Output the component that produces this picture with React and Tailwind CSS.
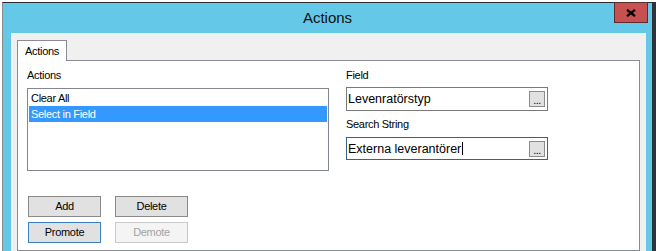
export default function App() {
  const btn =
    "w-[73px] h-[21px] flex items-center justify-center text-[11px] tracking-[-0.3px] border";
  return (
    <div className="w-[656px] h-[251px] bg-white overflow-hidden font-['Liberation_Sans',Arial,sans-serif] text-black">
      <div className="relative ml-[2px] mt-[2px] w-[654px] h-[249px] flex flex-col bg-[#64c9e9] border-t border-l border-r-4 border-t-[#2b2b2b] border-l-[#8a8a8a] border-r-[#2d3338]">
        <div className="h-[30px] flex items-center justify-center text-[15px] text-[#111]">
          Actions
        </div>
        <div className="absolute top-[-1px] right-[4px] w-[34px] h-[21px] bg-[#c75050] border border-[#5e2c2c] flex items-center justify-center">
          <svg width="10" height="8" viewBox="0 0 10 8">
            <path d="M1 0.8 L9 7.2 M9 0.8 L1 7.2" stroke="#000" strokeWidth="2.2" />
          </svg>
        </div>
        <div className="flex-1 ml-[8px] mr-[6px] bg-[#f0f0f0] px-[6px] pt-[7px] flex flex-col">
          <div className="relative z-10 -mb-px w-[50px] h-[21px] bg-white border-t border-l border-r border-[#898c95] flex items-center pl-[7px] text-[11px] tracking-[-0.3px]">
            Actions
          </div>
          <div className="flex-1 bg-white border border-[#898c95] flex pl-[9px] pt-[8px]">
            <div className="w-[302px] flex flex-col">
              <div className="h-[13px] leading-[13px] text-[11px] tracking-[-0.3px]">Actions</div>
              <div className="mt-[6px] h-[83px] border border-[#828790] pt-[1px] px-[1px] text-[11px] tracking-[-0.3px]">
                <div className="h-[16px] leading-[16px] pl-[2px]">Clear All</div>
                <div className="h-[16px] leading-[16px] pl-[2px] bg-[#3399ff] text-white">
                  Select in Field
                </div>
              </div>
              <div className="mt-[25px] ml-[1px] flex flex-col gap-[5px]">
                <div className="flex gap-[14px]">
                  <div className={btn + " bg-[#e1e1e1] border-[#8a8a8a]"}>Add</div>
                  <div className={btn + " bg-[#e1e1e1] border-[#8a8a8a]"}>Delete</div>
                </div>
                <div className="flex gap-[14px]">
                  <div className={btn + " bg-[#e1e1e1] border-[#3a7fc0]"}>Promote</div>
                  <div className={btn + " bg-[#f4f4f4] border-[#cacaca] text-[#a3a3a3]"}>Demote</div>
                </div>
              </div>
            </div>
            <div className="ml-[17px] w-[202px] flex flex-col">
              <div className="h-[13px] leading-[13px] text-[11px] tracking-[-0.3px]">Field</div>
              <div className="mt-[5px] h-[24px] border border-[#7a7a7a] flex items-center justify-between pl-[1px] pr-[2px]">
                <span className="text-[12.5px] leading-[14px]">Levenratörstyp</span>
                <div className="w-[16px] h-[16px] bg-[#e1e1e1] border border-[#8c8c8c] flex items-end justify-center text-[11px] leading-[11px] tracking-[-0.5px]">
                  ...
                </div>
              </div>
              <div className="mt-[7px] h-[13px] leading-[13px] text-[11px] tracking-[-0.3px]">Search String</div>
              <div className="mt-[6px] h-[23px] border border-[#36628c] flex items-center justify-between pl-[1px] pr-[2px]">
                <span className="flex items-center text-[12.5px] leading-[14px]">
                  Externa leverantörer
                  <span className="inline-block w-px h-[13px] bg-black ml-[1px]" />
                </span>
                <div className="w-[16px] h-[16px] bg-[#e1e1e1] border border-[#8c8c8c] flex items-end justify-center text-[11px] leading-[11px] tracking-[-0.5px]">
                  ...
                </div>
              </div>
            </div>
          </div>
        </div>
      </div>
    </div>
  );
}
